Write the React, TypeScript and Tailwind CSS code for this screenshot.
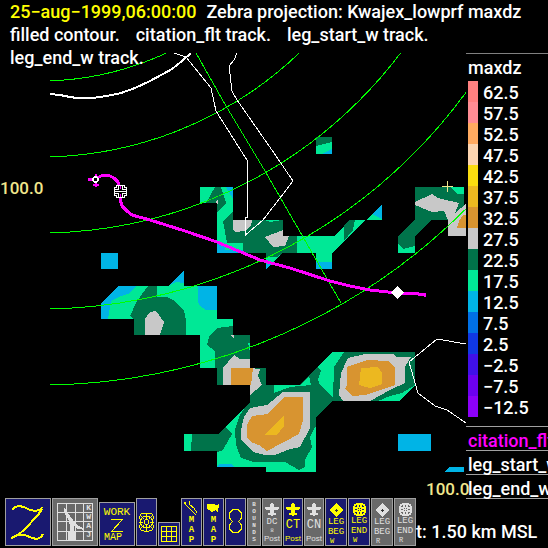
import React from "react";

const DARK = "#00734a";
const GREEN = "#00e896";
const BLUE = "#00b4e6";
const SILVER = "#c8c8c8";
const ORANGE = "#d89430";
const GOLD = "#ecb820";

type Shape = [string, string];

// Filled contour polygons, painted in order.
const contours: Shape[] = [
  // isolated cells
  [DARK, "316,137 332,137 332,154 316,154"],
  [GREEN, "316,146 332,142 332,154 316,154"],
  [BLUE, "322,154 332,149 332,154"],
  [BLUE, "101,253 118,253 118,269 101,269"],
  [BLUE, "168,286 184,270 184,286"],
  [GREEN, "168,286 176,282 184,283 184,286"],
  [BLUE, "398,434 431,434 431,451 398,451"],
  [BLUE, "444,472 449,467 464,467 464,472"],
  // western cluster
  [GREEN, "101,303 118,286 217,286 217,319 233,319 233,335 250,335 250,368 200,368 200,335 134,335 134,319 101,319"],
  [BLUE, "101,303 118,286 136,286 130,293 119,297 111,301 108,319 101,319"],
  [BLUE, "198,286 217,286 217,310 206,310 200,306 198,302"],
  [DARK, "134,335 134,319 130,316 137,301 148,286 157,286 157,297 167,297 175,301 184,311 186,320 186,335"],
  [SILVER, "145,335 145,319 150,312 156,311 164,322 160,335"],
  [DARK, "215,368 215,351 207,345 209,337 217,328 233,326 233,335 250,335 250,368 266,368 266,385 217,385 217,368"],
  [GREEN, "248,343 250,343 250,352"],
  [SILVER, "231,335 234,335 234,339"],
  // southern cluster
  [DARK, "250,385 300,385 332,352 415,352 415,384 399,401 332,401 316,418 316,472 266,472 266,467 217,467 217,451 184,451 184,434 218,434 250,402"],
  [GREEN, "184,434 192,434 191,451 184,451"],
  [GREEN, "274,385 300,385 309,376 311,385 290,387 274,393"],
  [GREEN, "317,367 332,352 344,352 338,361 334,367 333,397 320,385 318,379 321,371"],
  [GREEN, "225,427 246,406 240,415 235,430 236,445 241,458 253,462 285,462 299,470 305,467 305,460 312,447 310,437 315,427 316,427 316,472 266,472 266,467 217,467 217,452 223,450 228,441 232,434"],
  [BLUE, "219,464 232,464 234,467 217,467"],
  [SILVER, "223,385 223,368 234,355 240,359 250,359 250,368 260,369 258,376 262,385 250,395 250,385"],
  [ORANGE, "231,368 253,368 251,385 231,385"],
  [SILVER, "250,408 267,405 283,392 310,392 310,428 300,447 290,449 275,455 265,455 253,452 241,440 241,430 244,417"],
  [ORANGE, "252,416 268,414 277,404 284,397 303,397 303,420 299,434 267,451 259,445 253,443 247,438 247,425"],
  [GOLD, "284,415 284,426 277,435 264,435"],
  [SILVER, "348,358 365,354 393,354 397,357 411,357 405,367 405,383 390,390 370,401 343,401 339,395 341,373"],
  [ORANGE, "347,367 367,360 388,361 395,367 395,385 365,395 353,396 345,389 347,385"],
  [GOLD, "361,368 378,367 382,373 382,384 370,388 359,385"],
  [GREEN, "415,385 399,401 378,401 390,396 402,393"],
  // central cluster
  [GREEN, "200,187 233,187 233,220 283,220 283,236 334,236 350,220 366,220 382,204 382,220 366,220 332,253 332,269 316,269 316,253 283,253 266,269 266,253 217,253 217,203 200,203"],
  [DARK, "206,203 215,187 221,187 226,203 217,213 217,203"],
  [DARK, "233,212 233,220 283,220 283,236 297,236 297,253 283,253 277,257 266,257 266,253 243,253 243,243 227,243 223,221"],
  [GREEN, "264,220 282,220 270,222"],
  [SILVER, "233,220 252,220 251,226 245,231 235,232 233,230"],
  [SILVER, "265,237 283,230 283,236 289,236 285,246 273,247"],
  [SILVER, "215,202 218,199 218,205"],
  [DARK, "349,220 355,220 353,230 344,241 344,225"],
  [BLUE, "217,242 225,246 225,250 243,250 243,253 217,253"],
  [BLUE, "266,264 271,264 266,269"],
  [BLUE, "316,262 332,262 332,269 316,269"],
  [BLUE, "372,214 382,204 382,219"],
  [BLUE, "226,187 233,187 233,199"],
  // eastern cluster
  [DARK, "415,187 464,187 464,220 431,220 415,236 415,253 398,253 398,236 415,220"],
  [GREEN, "450,187 464,187 464,194 457,194"],
  [SILVER, "415,202 432,194 438,198 459,203 455,213 466,204 466,236 448,236 448,220 444,211 432,212 415,205"],
  [ORANGE, "463,215 466,215 466,228 457,228 459,221"],
  [GREEN, "398,243 403,249 415,246 415,253 398,253"],
];

const rangeRings = [299, 375, 451, 527, 603];

const legend: [string, string][] = [
  ["#ff8080", "62.5"],
  ["#ff8c94", "57.5"],
  ["#ffaa60", "52.5"],
  ["#fcd5b0", "47.5"],
  ["#fadc10", "42.5"],
  ["#ecb820", "37.5"],
  ["#d89430", "32.5"],
  ["#c8c8c8", "27.5"],
  ["#00734a", "22.5"],
  ["#00e896", "17.5"],
  ["#00b4e6", "12.5"],
  ["#0070e6", "7.5"],
  ["#1038e4", "2.5"],
  ["#4010e8", "−2.5"],
  ["#6c00f0", "−7.5"],
  ["#8c00f8", "−12.5"],
];

function RadarMap() {
  return (
    <svg
      viewBox="0 53 466 445"
      preserveAspectRatio="xMinYMin slice"
      className="block h-[445px] w-full overflow-visible"
      shapeRendering="crispEdges"
      role="img"
      aria-label="maxdz"
    >
      <defs>
        <clipPath id="plot">
          <rect x="50" y="53" width="416" height="445" />
        </clipPath>
      </defs>
      <g clipPath="url(#plot)">
        {contours.map(([fill, points], i) => (
          <polygon key={i} fill={fill} points={points} />
        ))}
        <g fill="none" stroke="#00ff00">
          {rangeRings.map((r) => (
            <circle key={r} cx="40" cy="-218" r={r} />
          ))}
          <path d="M196 53 226 106 265 171 341 303" />
        </g>
        <g fill="none" stroke="#fff">
          <path strokeWidth="2" d="M50 94 60 95 70 97 77 98 92 98 107 96 121 93 135 88 150 81 163 74 172 69 182 61 191 53" />
          <path d="M174 53 186 57 211 88 216 111 247.500 161V217H245.500V235L263 220 280 198 293 181 274 153 237 100 232 91 229 66 234 60 237 53" />
          <path d="M466 344 437 339 409 362 418 393 435 406 447 410 466 423" />
        </g>
        <path
          fill="none"
          stroke="#ff00ff"
          strokeWidth="3"
          d="M88 179H95L101 176 108 175 114 178 118 182 120 188V199L122 206 127 211 132 215 150 220 185 231 217 242 260 260 290 268 330 281 350 286 370 290 397 293H412L425 295"
        />
        <path stroke="#ff00ff" strokeWidth="2" d="M93 185H99M96 174V187M425 293V297" />
        <circle cx="95.500" cy="179.500" r="2.500" fill="#000" stroke="#fff" strokeWidth="1.500" />
        <g fill="#000" stroke="#fff">
          <path d="M116.500 185.500H124.500V187.500H126.500V195.500H124.500V197.500H116.500V195.500H114.500V187.500H116.500Z" />
          <path fill="none" d="M118.500 186V189.500H115M122.500 186V189.500H126M118.500 197V193.500H115M122.500 197V193.500H126M115 191.500H126" />
        </g>
        <path stroke="#ff00ff" d="M120.500 186V189M120.500 194V197" />
        <path fill="#fff" d="M397 286 404 292.500 397 299 391 292.500Z" />
        <path stroke="#f0e68c" d="M442 186.500H453M447.500 181V192" />
      </g>
      <g fill="#f0e68c" className="font-['Roboto',sans-serif] text-[17px] font-medium">
        <text x="0" y="194">100.0</text>
        <text x="426" y="495">100.0</text>
      </g>
    </svg>
  );
}

const gray = "border-[#a0a0a0] bg-[#696969] text-[#e0e0e0]";
const navy = "border-[#a0a0a0] bg-[#191970] text-[#ffff00]";

function Tool({ label, look, size, children }: { label: string; look: string; size: string; children: React.ReactNode }) {
  return (
    <button
      type="button"
      aria-label={label}
      className={`flex shrink-0 flex-col items-center overflow-hidden border font-['Liberation_Mono',monospace] ${look} ${size}`}
    >
      {children}
    </button>
  );
}

function Stack({ text, className }: { text: string; className: string }) {
  return (
    <span className={`flex flex-col items-center ${className}`}>
      {text.split("").map((c, i) => (
        <span key={i}>{c}</span>
      ))}
    </span>
  );
}

function Plane() {
  return (
    <svg viewBox="0 0 14 14" className="mt-1 h-[14px] w-[14px] shrink-0" fill="currentColor" shapeRendering="crispEdges">
      <path d="M6 0H8V1H9V4H14V6H13V7H9V10H11V12H8V13H6V12H3V10H5V7H1V6H0V4H5V1H6Z" />
    </svg>
  );
}

function Diamond() {
  return (
    <svg viewBox="0 0 14 14" className="mt-1 h-[14px] w-[14px] shrink-0" shapeRendering="crispEdges">
      <path fill="currentColor" d="M7 0 14 7 7 14 0 7Z" />
      <path stroke="#333" d="M6 7.500H9M7.500 6V9" />
    </svg>
  );
}

function EndMark() {
  return (
    <svg viewBox="0 0 13 13" className="mt-1 h-[13px] w-[13px] shrink-0" fill="currentColor" shapeRendering="crispEdges">
      <path
        fillRule="evenodd"
        d="M3 0H10V1H12V3H13V10H12V12H10V13H3V12H1V10H0V3H1V1H3ZM3 2H4V4H2V3H3ZM9 2H10V3H11V4H9ZM2 9H4V11H3V10H2ZM9 9H11V10H10V11H9ZM6 2H7V4H6ZM6 9H7V11H6ZM2 6H4V7H2ZM9 6H11V7H9ZM5 5H6V6H5ZM7 5H8V6H7ZM5 7H6V8H5ZM7 7H8V8H7Z"
      />
    </svg>
  );
}

const legText = "text-[9px] leading-[10px]";

function Leg({ kind, last, look }: { kind: "BEG" | "END"; last: string; look: string }) {
  return (
    <Tool label={`LEG ${kind} ${last}`} look={look} size="h-12 w-[22px]">
      {kind === "BEG" ? <Diamond /> : <EndMark />}
      <span className={legText}>LEG</span>
      <span className={legText}>{kind}</span>
      <span className="self-start pl-1 text-[7px] leading-[9px]">{last}</span>
    </Tool>
  );
}

const postText = "font-['Liberation_Sans',sans-serif] text-[8px] leading-[10px]";

function Toolbar() {
  return (
    <div role="toolbar" className="flex items-end gap-px pl-[5px]">
      <Tool label="Z" look={navy} size="h-12 w-[46px]">
        <svg viewBox="0 0 46 48" className="-m-px h-12 w-[46px] shrink-0" fill="none" stroke="currentColor" strokeWidth="2" shapeRendering="crispEdges">
          <path d="M7 12 10 9 14 8 19 9 25 12 31 13 36 11 37 9" />
          <path d="M37 11 33 17 28 22 24 27 19 32 14 36 9 39 6 40" />
          <path d="M6 40 13 37 20 37 27 40 32 41 36 39 38 36" />
        </svg>
      </Tool>
      <Tool label="KWAJ" look={gray} size="h-12 w-[46px]">
        <span className="relative block h-[46px] w-11">
          <svg viewBox="0 0 44 46" className="h-[46px] w-11" fill="none" stroke="currentColor" shapeRendering="crispEdges">
            <path d="M4.500 4.500H39.500V41.500H4.500ZM13.500 4V42M22.500 4V42M30.500 4V42M4 13.500H40M4 22.500H40M4 32.500H40" />
            <path fill="currentColor" d="M15 40V35L17 32V25L16 21 12 14 11 9 13 12 17 18 20 22 25 27 29 29 29 30 24 29 20 25 20 32 22 35V40Z" />
          </svg>
          <Stack text="KWAJ" className="absolute top-[4px] right-[6px] text-[8px] leading-[9px] font-bold" />
        </span>
      </Tool>
      <Tool label="WORK Z MAP" look={navy} size="h-11 w-9">
        <span className="mt-[3px] text-[11px] leading-[13px]">WORK</span>
        <svg viewBox="0 0 12 13" className="h-[13px] w-3 shrink-0" fill="none" stroke="currentColor" shapeRendering="crispEdges">
          <path d="M0 .5H11.500L.5 12.500H12" />
        </svg>
        <span className="self-start pl-1 text-[10px] leading-[12px]">MAP</span>
      </Tool>
      <Tool label="Radar rings" look={navy} size="h-12 w-[21px]">
        <svg viewBox="0 0 19 46" className="h-[46px] w-[19px] shrink-0" fill="none" stroke="currentColor" shapeRendering="crispEdges">
          <circle cx="9.500" cy="23" r="6" />
          <circle cx="9.500" cy="23" r="2.500" />
          <path d="M2 23H6M13 23H17M9.500 14V20M9.500 26V32M4 17 7 20M15 17 12 20M4 29 7 26M15 29 12 26M3 20Q2 14 7 14H12Q17 14 16 20M3 26Q2 32 7 32H12Q17 32 16 26" />
        </svg>
      </Tool>
      <Tool label="Grid" look={navy} size="h-6 w-[22px]">
        <svg viewBox="0 0 20 22" className="h-[22px] w-5 shrink-0" fill="none" stroke="currentColor" shapeRendering="crispEdges">
          <path d="M2.500 3.500H17.500V18.500H2.500ZM7.500 3V19M12.500 3V19M2 8.500H18M2 13.500H18" />
        </svg>
      </Tool>
      <Tool label="Coast map" look={navy} size="h-12 w-[21px]">
        <svg viewBox="0 0 19 16" className="h-4 w-[19px] shrink-0" fill="none" stroke="currentColor" shapeRendering="crispEdges">
          <path d="M2 3 4 6 8 10 12 14 14 16M7 2 8 6 12 9 15 14M2 3 4 4" />
        </svg>
        <Stack text="MAP" className="text-[9px] leading-[10px] font-bold" />
      </Tool>
      <Tool label="State map" look={navy} size="h-12 w-[21px]">
        <svg viewBox="0 0 19 16" className="h-4 w-[19px] shrink-0" fill="currentColor" shapeRendering="crispEdges">
          <path d="M3 5H10L12 6 15 5V8L14 10V14L12 11 9 12 8 14 7 12 4 11 3 9Z" />
        </svg>
        <Stack text="MAP" className="text-[9px] leading-[10px] font-bold" />
      </Tool>
      <Tool label="Lobes" look={navy} size="h-12 w-[21px]">
        <svg viewBox="0 0 19 46" className="h-[46px] w-[19px] shrink-0" fill="none" stroke="currentColor" shapeRendering="crispEdges">
          <path d="M7 10.500H12L15.500 14V19L12.500 22.500 15.500 26V30L12 33.500H7L3.500 30V26L6.500 22.500 3.500 19V14Z" />
        </svg>
      </Tool>
      <Tool label="BOUNDS" look={gray} size="h-12 w-[14px]">
        <Stack text="BOUNDS" className="mt-[2px] text-[6px] leading-[7px] font-bold" />
      </Tool>
      <Tool label="DC8 Post" look={gray} size="h-12 w-5">
        <Plane />
        <span className="text-[9px] leading-[10px]">DC</span>
        <span className="text-[6px] leading-[7px]">8</span>
        <span className={postText}>Post</span>
      </Tool>
      <Tool label="CT Post" look={navy} size="h-12 w-5">
        <Plane />
        <span className="text-[12px] leading-[17px]">CT</span>
        <span className={postText}>Post</span>
      </Tool>
      <Tool label="CN Post" look={gray} size="h-12 w-5">
        <Plane />
        <span className="text-[12px] leading-[17px]">CN</span>
        <span className={postText}>Post</span>
      </Tool>
      <Leg kind="BEG" last="W" look={navy} />
      <Leg kind="END" last="W" look={navy} />
      <Leg kind="BEG" last="R" look={gray} />
      <Leg kind="END" last="R" look={gray} />
    </div>
  );
}

export default function App() {
  return (
    <div className="flex min-h-screen flex-col overflow-hidden bg-black font-['Roboto',sans-serif] text-[18px] font-medium text-white">
      <header className="z-10 h-[53px] pl-[10px] leading-[23px] whitespace-nowrap">
        <p>
          <span className="mr-[10px] text-[#ffff00]">25−aug−1999,06:00:00</span>
          Zebra projection: Kwajex_lowprf maxdz
        </p>
        <p className="flex gap-4">
          <span>filled contour.</span>
          <span>citation_flt track.</span>
          <span>leg_start_w track.</span>
        </p>
        <p>leg_end_w track.</p>
      </header>
      <main className="flex">
        <div className="min-w-0 flex-1">
          <RadarMap />
        </div>
        <aside className="z-10 w-[82px] shrink-0 overflow-hidden whitespace-nowrap">
          <h2 className="h-7 border-t border-[#808080] pl-[2px] leading-[27px]">maxdz</h2>
          <ul>
            {legend.map(([color, value]) => (
              <li key={value} className="flex h-[21px] gap-[5px] pl-[2px] leading-[23px]">
                <span className="w-[10px]" style={{ backgroundColor: color }} />
                {value}
              </li>
            ))}
          </ul>
          <ul className="mt-[9px] border-b border-[#a0a0a0] leading-[27px]">
            <li className="h-6 border-t border-[#a0a0a0] pl-[2px] text-[#ff00ff]">citation_flt</li>
            <li className="h-6 border-t border-[#a0a0a0] pl-[2px]">leg_start_w</li>
            <li className="h-6 border-t border-[#a0a0a0] pl-[2px]">leg_end_w</li>
          </ul>
        </aside>
      </main>
      <footer className="-mt-px flex pb-[2px] whitespace-nowrap">
        <Toolbar />
        <p className="pt-[22px] leading-[23px]">t: 1.50 km MSL</p>
      </footer>
    </div>
  );
}
